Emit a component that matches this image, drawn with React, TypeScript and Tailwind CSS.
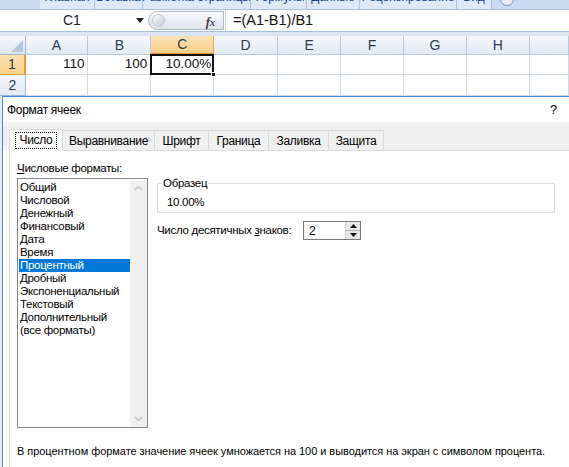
import React from "react";

const cols = [
  { k: "A", w: 64 },
  { k: "B", w: 64 },
  { k: "C", w: 64 },
  { k: "D", w: 65 },
  { k: "E", w: 64 },
  { k: "F", w: 64 },
  { k: "G", w: 64 },
  { k: "H", w: 64 },
  { k: "", w: 40 },
];

const ribbonTabs = [
  { t: "Главная", w: 55 },
  { t: "Вставка", w: 48 },
  { t: "Разметка страницы", w: 108 },
  { t: "Формулы", w: 56 },
  { t: "Данные", w: 53 },
  { t: "Рецензирование", w: 97 },
  { t: "Вид", w: 35 },
];

const formats = [
  "Общий",
  "Числовой",
  "Денежный",
  "Финансовый",
  "Дата",
  "Время",
  "Процентный",
  "Дробный",
  "Экспоненциальный",
  "Текстовый",
  "Дополнительный",
  "(все форматы)",
];

const dlgTabs = [
  { t: "Выравнивание", w: 92 },
  { t: "Шрифт", w: 54 },
  { t: "Граница", w: 60 },
  { t: "Заливка", w: 60 },
  { t: "Защита", w: 55 },
];

export default function App() {
  const sheetFont = { fontFamily: '"Liberation Sans", "Open Sans", sans-serif' };
  const dlgFont = { fontFamily: '"Liberation Sans", "Noto Sans", sans-serif' };
  return (
    <div className="w-[569px] h-[467px] overflow-hidden bg-white relative">
      {/* Ribbon tab strip (cut off) */}
      <div className="h-[10px] flex bg-[#c9dbf0] overflow-hidden border-b border-[#a8c1e2]">
        <div className="w-[40px]" />
        {ribbonTabs.map((r) => (
          <div
            key={r.t}
            className="h-[10px] flex justify-center border-r border-[#a9c2e3] bg-[#dde9f7] overflow-hidden"
            style={{ width: r.w }}
          >
            <span
              className="text-[12px] leading-[14px] text-[#15428b] -mt-[10px] whitespace-nowrap"
              style={{ fontFamily: '"Liberation Sans", sans-serif' }}
            >
              {r.t}
            </span>
          </div>
        ))}
        <div className="w-[14px] h-[14px] rounded-full border border-[#6d8fc0] ml-[8px] -mt-[8px] bg-[#e7effa]" />
      </div>

      {/* Formula bar */}
      <div className="h-[22px] flex items-center bg-white border-b border-[#a6bfdf]" style={sheetFont}>
        <div className="w-[148px] h-full flex items-center relative">
          <span className="absolute left-[63px] text-[14px] text-[#222]">C1</span>
          <svg className="absolute left-[136px] top-[8px]" width="8" height="5" viewBox="0 0 8 5">
            <path d="M0 0 H8 L4 5 Z" fill="#222" />
          </svg>
        </div>
        <div className="w-[76px] h-[19px] rounded-l-full border border-[#a8b8cc] bg-gradient-to-b from-[#fbfcfd] via-[#e9edf2] to-[#dfe5ec] relative">
          <div className="absolute left-[3px] top-[2px] w-[13px] h-[13px] rounded-full bg-gradient-to-br from-[#ffffff] to-[#c4ccd6] border border-[#c0c8d2]" />
          <span
            className="absolute right-[8px] top-[0px] text-[13px] italic font-bold text-[#444]"
            style={{ fontFamily: '"Liberation Serif", serif' }}
          >
            f<span className="text-[10px]">x</span>
          </span>
        </div>
        <div className="w-[1px] h-full bg-[#c5d3e6] ml-[1px]" />
        <span className="ml-[7px] text-[14.5px] text-[#111]">=(A1-B1)/B1</span>
      </div>
      <div className="h-[4px] bg-[#dbe5f1]" />

      {/* Grid */}
      <div style={sheetFont}>
        <div className="flex h-[19px]">
          <div className="w-[26px] h-full bg-gradient-to-b from-[#f3f7fb] to-[#dde7f4] border-r border-b border-[#9eb6ce] relative">
            <svg className="absolute right-[2px] bottom-[2px]" width="12" height="12" viewBox="0 0 12 12">
              <path d="M12 0 V12 H0 Z" fill="#b6c8de" />
            </svg>
          </div>
          {cols.map((c) => (
            <div
              key={c.k + c.w}
              className={
                c.k === "C"
                  ? "h-full flex items-center justify-center text-[14px] text-[#2b3b52] bg-gradient-to-b from-[#fbe3b6] to-[#f7cf87] border-r border-[#f2a04a] border-b-2 border-b-[#f29436]"
                  : "h-full flex items-center justify-center text-[14px] text-[#2b3b52] bg-gradient-to-b from-[#f3f7fb] to-[#e2eaf5] border-r border-b border-[#b6c9de]"
              }
              style={{ width: c.w }}
            >
              {c.k}
            </div>
          ))}
        </div>
        {/* Row 1 */}
        <div className="flex h-[20px]">
          <div className="w-[26px] h-full flex items-center justify-center text-[14px] text-[#2b3b52] bg-gradient-to-b from-[#fbe3b6] to-[#f7cf87] border-r-2 border-r-[#f29436] border-b border-[#f2a04a]">
            1
          </div>
          {cols.map((c, i) => {
            const val = i === 0 ? "110" : i === 1 ? "100" : i === 2 ? "10.00%" : "";
            if (c.k === "C") {
              return (
                <div
                  key={c.k}
                  className="relative border-2 border-[#111] -ml-[1px] -mt-[1px] h-[21px] flex items-center justify-end pr-[1px] text-[13.5px] text-[#111] bg-white z-10"
                  style={{ width: c.w + 1 }}
                >
                  {val}
                  <div className="absolute -right-[4px] -bottom-[4px] w-[5px] h-[5px] bg-[#111] border border-white" />
                </div>
              );
            }
            return (
              <div
                key={c.k + c.w}
                className="h-full flex items-center justify-end pr-[3px] text-[13.5px] text-[#111] border-r border-b border-[#d0d7e5]"
                style={{ width: c.w }}
              >
                {val}
              </div>
            );
          })}
        </div>
        {/* Row 2 */}
        <div className="flex h-[21px]">
          <div className="w-[26px] h-full flex items-center justify-center text-[14px] text-[#2b3b52] bg-gradient-to-b from-[#f3f7fb] to-[#e2eaf5] border-r border-b border-[#9eb6ce]">
            2
          </div>
          {cols.map((c) => (
            <div
              key={c.k + c.w}
              className="h-full border-r border-b border-[#d0d7e5]"
              style={{ width: c.w }}
            />
          ))}
        </div>
      </div>

      {/* Dialog */}
      <div className="flex tracking-[-0.3px]" style={dlgFont}>
        <div className="w-[2px] bg-[#e4ecf7]" />
        <div className="flex-1 border-l border-t border-[#3c8fdc] bg-white">
          {/* title */}
          <div className="h-[25px] flex items-center justify-between pl-[4px] pr-[12px]">
            <span className="text-[12px] text-[#000]">Формат ячеек</span>
            <span className="text-[13px] text-[#000]">?</span>
          </div>
          {/* tabs strip */}
          <div className="h-[28px] bg-[#f0f0f0] flex items-end pl-[6px]">
            <div className="w-[54px] h-[22px] bg-white border border-b-0 border-[#d9d9d9] flex items-center justify-center -mb-[1px] z-10">
              <span className="text-[12px] text-[#000] px-[3px] outline-1 outline-dotted outline-[#000] leading-[15px]">Число</span>
            </div>
            {dlgTabs.map((t) => (
              <div
                key={t.t}
                className="h-[20px] bg-[#f0f0f0] border border-l-0 border-b-0 border-[#d9d9d9] flex items-center justify-center text-[12px] text-[#000]"
                style={{ width: t.w }}
              >
                {t.t}
              </div>
            ))}
          </div>
          {/* panel */}
          <div className="ml-[6px] border-l border-t border-[#d9d9d9] h-[320px] pl-[7px] pt-[9px] relative">
            <div className="text-[11.5px] text-[#000] leading-[16px]">
              <span className="underline">Ч</span>исловые форматы:
            </div>
            <div className="flex mt-[2px]">
              <div className="w-[131px] h-[250px] border border-[#828790] flex pl-[1px] pt-[1px]">
                <div className="flex-1 pt-[1px]">
                  {formats.map((f) => (
                    <div
                      key={f}
                      className={
                        f === "Процентный"
                          ? "h-[13px] leading-[13px] text-[11.5px] bg-[#0078d7] text-white pl-[1px] whitespace-nowrap"
                          : "h-[13px] leading-[13px] text-[11.5px] text-[#000] pl-[1px] whitespace-nowrap"
                      }
                    >
                      {f}
                    </div>
                  ))}
                </div>
                <div className="w-[17px] h-full bg-[#f0f0f0] flex flex-col justify-between items-center py-[5px]">
                  <svg width="9" height="6" viewBox="0 0 9 6">
                    <path d="M1 5 L4.5 1.5 L8 5" stroke="#c2c2c2" strokeWidth="1.5" fill="none" />
                  </svg>
                  <svg width="9" height="6" viewBox="0 0 9 6">
                    <path d="M1 1 L4.5 4.5 L8 1" stroke="#c2c2c2" strokeWidth="1.5" fill="none" />
                  </svg>
                </div>
              </div>
              <div className="ml-[9px] flex-1 -mt-[1px]">
                <div className="relative border border-[#dcdcdc] h-[30px] w-[398px] mt-[6px]">
                  <span className="absolute -top-[9px] left-[4px] bg-white px-[1px] text-[11.5px] leading-[16px] text-[#000]">
                    Образец
                  </span>
                  <span className="absolute left-[9px] top-[10px] text-[11.5px] leading-[16px] text-[#000]">10.00%</span>
                </div>
                <div className="flex items-center mt-[8px]">
                  <span className="text-[11.5px] text-[#000] w-[146px] whitespace-nowrap">
                    Число десятичных <span className="underline">з</span>наков:
                  </span>
                  <div className="w-[58px] h-[19px] border border-[#7a7a7a] flex items-center">
                    <span className="flex-1 pl-[5px] text-[12px] text-[#000]">2</span>
                    <div className="w-[15px] h-full flex flex-col border-l border-[#d0d0d0]">
                      <div className="flex-1 bg-[#e8e8e8] border-b border-[#adadad] flex items-center justify-center">
                        <svg width="7" height="4" viewBox="0 0 7 4">
                          <path d="M0 4 L3.5 0 L7 4 Z" fill="#111" />
                        </svg>
                      </div>
                      <div className="flex-1 bg-[#e8e8e8] flex items-center justify-center">
                        <svg width="7" height="4" viewBox="0 0 7 4">
                          <path d="M0 0 L3.5 4 L7 0 Z" fill="#111" />
                        </svg>
                      </div>
                    </div>
                  </div>
                </div>
              </div>
            </div>
            <div
              className="mt-[15px] text-[11px] text-[#000] whitespace-nowrap tracking-[-0.05px]"
              style={{ fontFamily: '"Liberation Sans", sans-serif' }}
            >
              В процентном формате значение ячеек умножается на 100 и выводится на экран с символом процента.
            </div>
          </div>
        </div>
      </div>
    </div>
  );
}
